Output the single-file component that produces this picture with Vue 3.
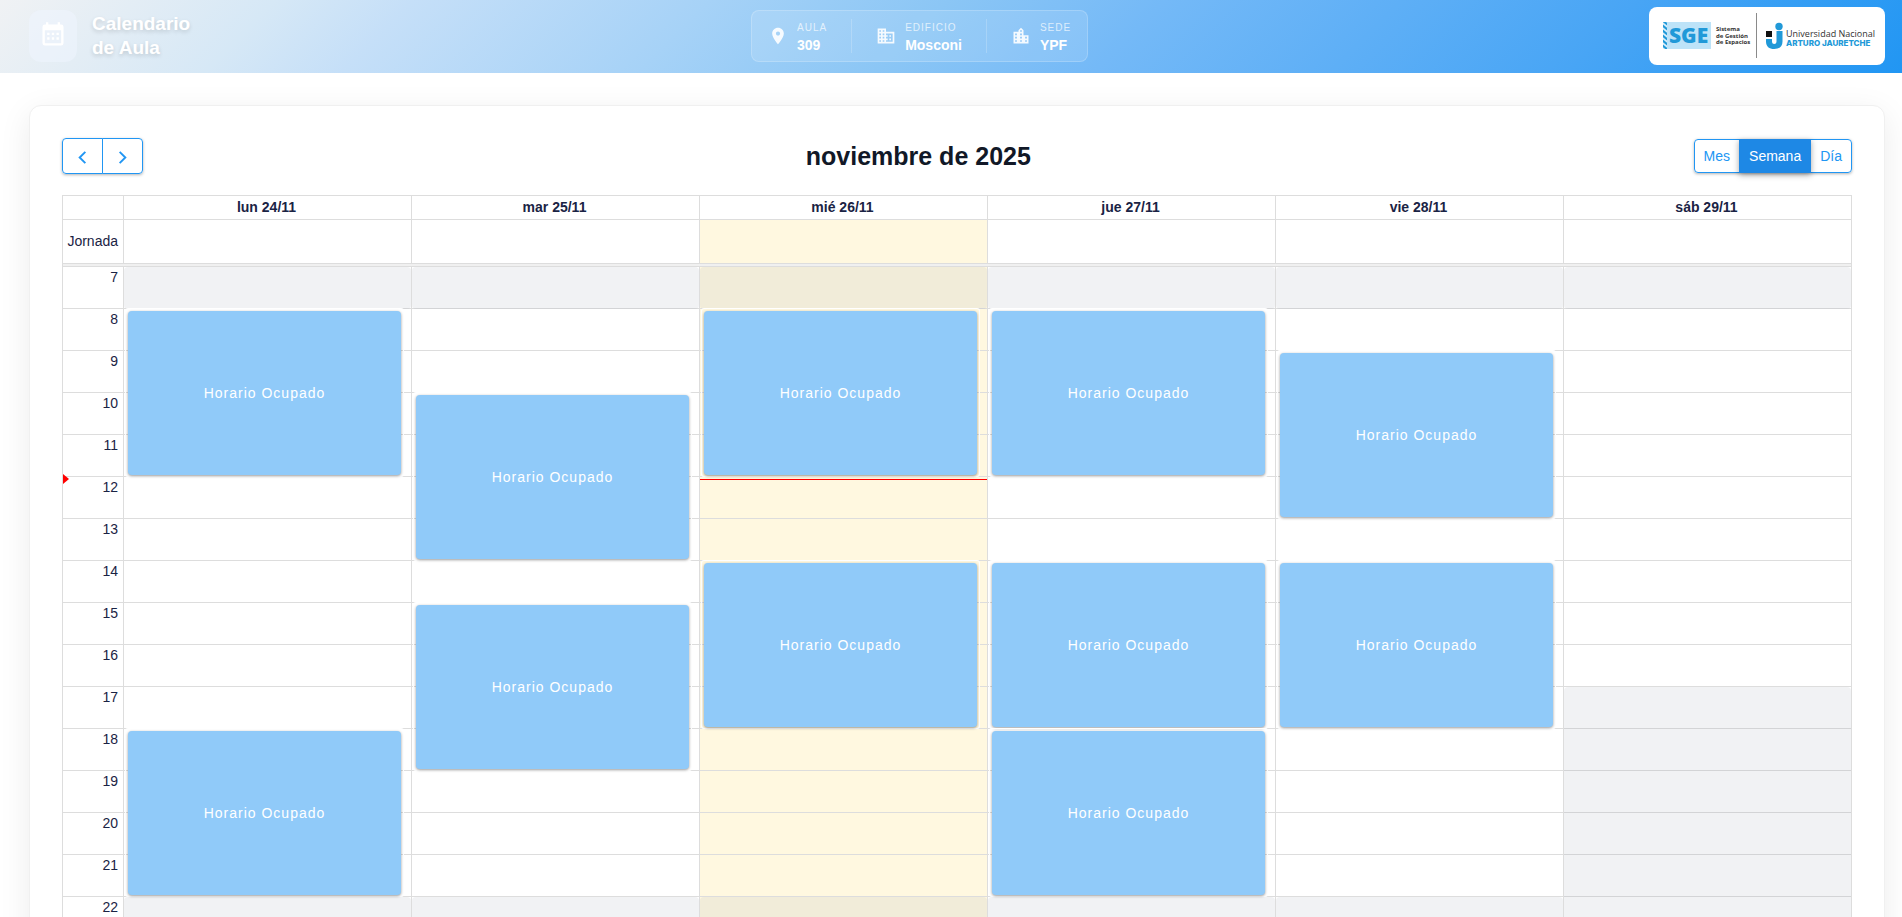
<script setup>
import { ref } from 'vue';

const info = [
    {
        label: 'Aula',
        value: '309',
        icon: 'M12 2C8.13 2 5 5.13 5 9c0 5.25 7 13 7 13s7-7.75 7-13c0-3.87-3.13-7-7-7zm0 9.5c-1.38 0-2.5-1.12-2.5-2.5s1.12-2.5 2.5-2.5 2.5 1.12 2.5 2.5-1.12 2.5-2.5 2.5z',
    },
    {
        label: 'Edificio',
        value: 'Mosconi',
        icon: 'M12 7V3H2v18h20V7H12zM6 19H4v-2h2v2zm0-4H4v-2h2v2zm0-4H4V9h2v2zm0-4H4V5h2v2zm4 12H8v-2h2v2zm0-4H8v-2h2v2zm0-4H8V9h2v2zm0-4H8V5h2v2zm10 12h-8v-2h2v-2h-2v-2h2v-2h-2V9h8v10zm-2-8h-2v2h2v-2zm0 4h-2v2h2v-2z',
    },
    {
        label: 'Sede',
        value: 'YPF',
        icon: 'M15 11V5l-3-3-3 3v2H3v14h18V11h-6zm-8 8H5v-2h2v2zm0-4H5v-2h2v2zm0-4H5V9h2v2zm6 8h-2v-2h2v2zm0-4h-2v-2h2v2zm0-4h-2V9h2v2zm0-4h-2V5h2v2zm6 12h-2v-2h2v2zm0-4h-2v-2h2v2z',
    },
];

const views = ['Mes', 'Semana', 'Día'];
const currentView = ref('Semana');

const firstHour = 7;
const lastHour = 24;
const slotHeight = 42;
const hours = Array.from({ length: lastHour - firstHour }, (_, i) => firstHour + i);

// busy: occupied ranges, closed: hours outside of the opening times
const days = [
    { name: 'lun 24/11', busy: [[8, 12], [18, 22]], closed: [[7, 8], [22, 24]] },
    { name: 'mar 25/11', busy: [[10, 14], [15, 19]], closed: [[7, 8], [22, 24]] },
    { name: 'mié 26/11', busy: [[8, 12], [14, 18]], closed: [[7, 8], [22, 24]], today: true },
    { name: 'jue 27/11', busy: [[8, 12], [14, 18], [18, 22]], closed: [[7, 8], [22, 24]] },
    { name: 'vie 28/11', busy: [[9, 13], [14, 18]], closed: [[7, 8], [22, 24]] },
    { name: 'sáb 29/11', busy: [], closed: [[7, 8], [17, 24]] },
];

const now = 12 + 3 / 60;

const rows = ([start, end]) => ({
    gridRow: `${start - firstHour + 1} / ${end - firstHour + 1}`,
});

const nowPosition = {
    top: `${Math.round((now - firstHour) * slotHeight)}px`,
};
</script>

<template>
    <header class="topbar">
        <div class="brand">
            <span class="brand-icon">
                <svg viewBox="0 0 24 24" width="28" height="28" aria-hidden="true">
                    <path
                        fill="#fff"
                        d="M9 10v2H7v-2h2m4 0v2h-2v-2h2m4 0v2h-2v-2h2m2-7a2 2 0 0 1 2 2v14a2 2 0 0 1-2 2H5a2 2 0 0 1-2-2V5a2 2 0 0 1 2-2h1V1h2v2h8V1h2v2h1m0 16V8H5v11h14M9 14v2H7v-2h2m4 0v2h-2v-2h2m4 0v2h-2v-2h2z"
                    />
                </svg>
            </span>
            <h1 class="brand-title">Calendario<br />de Aula</h1>
        </div>

        <dl class="info">
            <div v-for="item in info" :key="item.label" class="info-item">
                <svg viewBox="0 0 24 24" width="20" height="20" aria-hidden="true">
                    <path :d="item.icon" />
                </svg>
                <div>
                    <dt>{{ item.label }}</dt>
                    <dd>{{ item.value }}</dd>
                </div>
            </div>
        </dl>

        <div class="logos">
            <svg viewBox="0 0 236 58" width="236" height="58">
                <defs>
                    <clipPath id="hatch">
                        <rect x="14" y="15" width="4" height="27" />
                    </clipPath>
                </defs>
                <rect x="14" y="15" width="48" height="27" fill="#bde3f8" />
                <g clip-path="url(#hatch)">
                    <rect x="14" y="15" width="4" height="27" fill="#d9effb" />
                    <path
                        d="M13 13l6 5M13 18l6 5M13 23l6 5M13 28l6 5M13 33l6 5M13 38l6 5"
                        stroke="#2199d8"
                        stroke-width="2"
                    />
                </g>
                <text x="20" y="36" class="logo-sge">SGE</text>
                <text class="logo-small">
                    <tspan x="67" y="24">Sistema</tspan>
                    <tspan x="67" y="31">de Gestión</tspan>
                    <tspan x="67" y="37">de Espacios</tspan>
                </text>
                <rect x="107" y="6" width="1" height="45" fill="#8a8a8a" />
                <rect x="117" y="24" width="6" height="6" fill="#111" />
                <circle cx="130" cy="19.500" r="3.700" fill="#2199d8" />
                <path
                    d="M117 32h6v2.500c0 1.700 1 2.500 2.200 2.500s2.300-.8 2.300-2.500V24h6v10.500c0 5-3.300 7.500-8.300 7.500S117 39.500 117 34.500z"
                    fill="#2199d8"
                />
                <text x="137" y="30" class="logo-un">Universidad Nacional</text>
                <text x="137" y="39" class="logo-aj">ARTURO JAURETCHE</text>
            </svg>
        </div>
    </header>

    <main class="card">
        <div class="toolbar">
            <div class="btn-group nav-group">
                <button type="button" class="btn" aria-label="Anterior">
                    <svg viewBox="0 0 20 20" aria-hidden="true">
                        <path d="M13 4l-6 6 6 6" />
                    </svg>
                </button>
                <button type="button" class="btn" aria-label="Siguiente">
                    <svg viewBox="0 0 20 20" aria-hidden="true">
                        <path d="M7 4l6 6-6 6" />
                    </svg>
                </button>
            </div>
            <h2 class="toolbar-title">noviembre de 2025</h2>
            <div class="btn-group">
                <button
                    v-for="view in views"
                    :key="view"
                    type="button"
                    class="btn"
                    :class="{ active: view === currentView }"
                    @click="currentView = view"
                >
                    {{ view }}
                </button>
            </div>
        </div>

        <div class="calendar">
            <table class="grid">
                <colgroup>
                    <col class="axis-col" />
                    <col v-for="day in days" :key="day.name" />
                </colgroup>
                <thead>
                    <tr class="head-row">
                        <td></td>
                        <th v-for="day in days" :key="day.name" scope="col">
                            {{ day.name }}
                        </th>
                    </tr>
                </thead>
                <tbody>
                    <tr class="allday-row">
                        <th scope="row" class="axis">Jornada</th>
                        <td v-for="day in days" :key="day.name" :class="{ today: day.today }"></td>
                    </tr>
                    <tr class="divider-row">
                        <td :colspan="days.length + 1"></td>
                    </tr>
                </tbody>
            </table>

            <div class="timegrid">
                <table class="grid">
                    <colgroup>
                        <col class="axis-col" />
                        <col v-for="day in days" :key="day.name" />
                    </colgroup>
                    <tbody>
                        <tr v-for="hour in hours" :key="hour" class="slot-row">
                            <th scope="row" class="axis">{{ hour }}</th>
                            <td
                                v-for="day in days"
                                :key="day.name"
                                :class="{ today: day.today }"
                            ></td>
                        </tr>
                    </tbody>
                </table>

                <div class="columns">
                    <div class="column-axis">
                        <span class="now-arrow" :style="nowPosition"></span>
                    </div>
                    <div v-for="day in days" :key="day.name" class="column">
                        <div
                            v-for="range in day.closed"
                            :key="'c' + range[0]"
                            class="closed"
                            :style="rows(range)"
                        ></div>
                        <div
                            v-for="range in day.busy"
                            :key="'b' + range[0]"
                            class="event-wrap"
                            :style="rows(range)"
                        >
                            <div class="event">Horario Ocupado</div>
                        </div>
                        <span v-if="day.today" class="now-line" :style="nowPosition"></span>
                    </div>
                </div>
            </div>
        </div>
    </main>
</template>

<style>
body {
    margin: 0;
    background: #fff;
    font-family: 'Liberation Sans', Arial, sans-serif;
    font-size: 14px;
    overflow-x: hidden;
}
</style>

<style scoped>
.topbar {
    display: flex;
    align-items: center;
    justify-content: space-between;
    padding: 7px 17px 8px 29px;
    background: linear-gradient(
        135deg,
        #f0f2f4 0%,
        #d6e8f6 14%,
        #c5dff8 21%,
        #a6d2f7 36%,
        #8bc6f5 48%,
        #74b9f7 59%,
        #48a5f5 83%,
        #2196f3 100%
    );
}

.brand {
    display: flex;
    align-items: center;
    gap: 15px;
}

.brand-icon {
    display: flex;
    padding: 11px 10px 13px;
    border-radius: 12px;
    background: rgba(240, 245, 255, 0.5);
}

.brand-title {
    margin: 0;
    color: #fff;
    font-size: 19px;
    line-height: 24px;
    text-shadow: 0 2px 4px rgba(0, 0, 0, 0.15);
}

.info {
    display: flex;
    margin: 0;
    padding: 8px 16px;
    border: 1px solid rgba(255, 255, 255, 0.2);
    border-radius: 8px;
    background: rgba(255, 255, 255, 0.12);
    color: #fff;
}

.info-item {
    display: flex;
    align-items: center;
    gap: 9px;
    height: 34px;
}

.info-item + .info-item {
    margin-left: 24px;
    padding-left: 24px;
    border-left: 1px solid rgba(255, 255, 255, 0.2);
}

.info-item svg {
    fill: rgba(255, 255, 255, 0.9);
}

.info-item dt {
    padding-top: 2px;
    font-size: 10px;
    line-height: 16px;
    letter-spacing: 1px;
    text-transform: uppercase;
    opacity: 0.7;
}

.info-item dd {
    margin: 0;
    font-size: 14px;
    font-weight: bold;
    line-height: 19px;
}

.logos {
    display: flex;
    border-radius: 8px;
    background: #fff;
}

.logo-sge {
    fill: #2199d8;
    font: 800 21px 'Open Sans', sans-serif;
}

.logo-small {
    fill: #333;
    font: 700 6px 'Open Sans', sans-serif;
}

.logo-un {
    fill: #333;
    font: 400 9px 'Open Sans', sans-serif;
}

.logo-aj {
    fill: #2199d8;
    font: 800 8px Inter, sans-serif;
}

.card {
    margin: 32px 17px 32px 29px;
    padding: 32px;
    border: 1px solid #f0f0f0;
    border-radius: 12px;
    background: #fff;
    box-shadow: 0 8px 32px rgba(0, 0, 0, 0.08);
}

.toolbar {
    display: flex;
    align-items: center;
    justify-content: space-between;
    margin-bottom: 21px;
}

.toolbar-title {
    margin: 0;
    color: #111827;
    font-size: 25px;
    line-height: 30px;
}

.btn-group {
    display: flex;
    border-radius: 4px;
    box-shadow: 0 1px 3px rgba(0, 0, 0, 0.3);
}

.btn {
    display: flex;
    align-items: center;
    height: 34px;
    padding: 0 9px;
    border: 1px solid #2196f3;
    background: #fff;
    color: #2196f3;
    font-family: inherit;
    font-size: 14px;
    cursor: pointer;
}

.btn + .btn {
    margin-left: -1px;
}

.btn:first-child {
    border-radius: 4px 0 0 4px;
}

.btn:last-child {
    border-radius: 0 4px 4px 0;
}

.btn.active {
    z-index: 1;
    border-color: #1e88e5;
    background: #1e88e5;
    color: #fff;
    box-shadow: 0 2px 6px rgba(0, 0, 0, 0.35);
}

.nav-group .btn {
    height: 36px;
    padding: 2px 10px 0;
}

.nav-group svg {
    width: 19px;
    height: 19px;
    fill: none;
    stroke: #2196f3;
    stroke-width: 2;
}

.calendar {
    border: 1px solid #ddd;
    border-width: 1px 0 0 1px;
    color: #1a2344;
}

.grid {
    width: 100%;
    table-layout: fixed;
    border-collapse: separate;
    border-spacing: 0;
}

.grid th,
.grid td {
    box-sizing: border-box;
    padding: 0;
    border: 1px solid #ddd;
    border-width: 0 1px 1px 0;
}

.axis-col {
    width: 61px;
}

.head-row {
    height: 24px;
}

.grid .head-row th {
    padding: 0 2px 2px 0;
}

.grid .axis {
    padding-right: 5px;
    font-weight: normal;
    line-height: 21px;
    text-align: right;
}

.allday-row {
    height: 44px;
}

.divider-row {
    height: 3px;
}

.divider-row td {
    height: 3px;
    background: #f0f0f0;
}

.slot-row {
    height: 42px;
}

.slot-row .axis {
    vertical-align: top;
}

.today {
    background: #fff8e0;
}

.timegrid {
    position: relative;
}

/* events drawn over the slots table */
.columns {
    position: absolute;
    inset: 0;
    display: grid;
    grid-template-columns: 61px repeat(6, minmax(0, 1fr));
}

.column-axis {
    position: relative;
}

.column {
    position: relative;
    display: grid;
    grid-template-rows: repeat(17, 42px);
    padding-right: 1px;
}

.closed {
    border-radius: 4px;
    background: rgba(156, 163, 175, 0.14);
}

.event-wrap {
    display: flex;
    margin: 0 8px 1px 2px;
    border-radius: 2px;
    box-shadow: 0 0 0 1px #fff;
}

.event {
    flex: 1;
    display: flex;
    align-items: center;
    justify-content: center;
    margin: 2px 2px 1px;
    border-radius: 4px;
    background: #90caf9;
    box-shadow: 0 1px 3px rgba(0, 0, 0, 0.4);
    color: #fff;
    letter-spacing: 1px;
}

.now-line {
    position: absolute;
    left: 0;
    right: 1px;
    border-top: 1px solid #f00;
}

.now-arrow {
    position: absolute;
    left: 0;
    margin-top: -5px;
    border: 5px solid transparent;
    border-left: 6px solid #f00;
    border-right: 0;
}
</style>
